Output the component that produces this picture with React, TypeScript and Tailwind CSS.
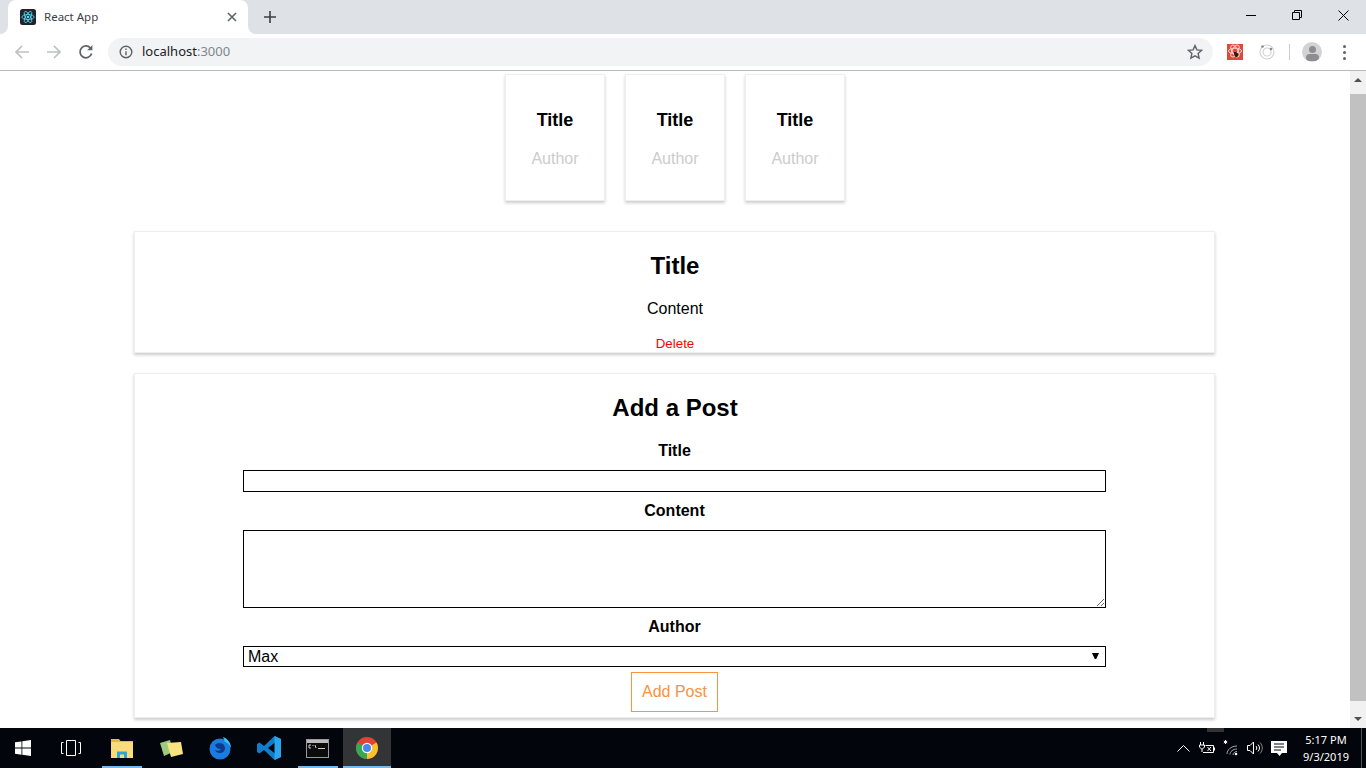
import { ReactNode } from "react";

const sans = "font-['Liberation_Sans',Arial,sans-serif]";
const chromeFont = "font-['Noto_Sans','Open_Sans',sans-serif]";

function ReactLogo({ size = 16 }: { size?: number }) {
  return (
    <svg width={size} height={size} viewBox="0 0 16 16">
      <rect width="16" height="16" rx="2.5" fill="#20232a" />
      <g fill="none" stroke="#61dafb" strokeWidth="0.8">
        <ellipse cx="8" cy="8" rx="6.2" ry="2.5" />
        <ellipse cx="8" cy="8" rx="6.2" ry="2.5" transform="rotate(60 8 8)" />
        <ellipse cx="8" cy="8" rx="6.2" ry="2.5" transform="rotate(120 8 8)" />
      </g>
      <circle cx="8" cy="8" r="1.3" fill="#61dafb" />
    </svg>
  );
}

function TabStrip() {
  return (
    <div className="flex h-[34px] shrink-0 bg-[#dee1e6]">
      <div className="relative ml-2 flex h-[34px] w-[240px] items-center rounded-t-lg bg-white pl-3 pr-[11px]">
        <div className="absolute bottom-0 left-[-8px] size-2 bg-white">
          <div className="size-2 rounded-br-lg bg-[#dee1e6]" />
        </div>
        <div className="absolute bottom-0 right-[-8px] size-2 bg-white">
          <div className="size-2 rounded-bl-lg bg-[#dee1e6]" />
        </div>
        <ReactLogo />
        <span className={`ml-2 flex-1 text-[11.5px] text-[#3c4043] ${chromeFont}`}>React App</span>
        <svg width="10" height="10" viewBox="0 0 10 10" stroke="#5f6368" strokeWidth="1.6">
          <path d="M1 1l8 8M9 1l-8 8" />
        </svg>
      </div>
      <div className="ml-[14px] flex h-[34px] w-4 items-center justify-center">
        <svg width="12" height="12" viewBox="0 0 12 12" stroke="#3c4043" strokeWidth="1.6">
          <path d="M6 0v12M0 6h12" />
        </svg>
      </div>
      <div className="flex-1" />
      <div className="flex h-[30px] w-[138px] items-center">
        <div className="flex w-[46px] justify-center">
          <div className="h-px w-[10px] bg-black" />
        </div>
        <div className="flex w-[46px] justify-center">
          <svg width="10" height="10" viewBox="0 0 10 10" fill="none" stroke="#000" strokeWidth="1">
            <path d="M.5 2.5h7v7h-7zM2.5 2.5v-2h7v7h-2" />
          </svg>
        </div>
        <div className="flex w-[46px] justify-center">
          <svg width="11" height="11" viewBox="0 0 11 11" stroke="#000" strokeWidth="1">
            <path d="M.5.5l10 10M10.500.5l-10 10" />
          </svg>
        </div>
      </div>
    </div>
  );
}

function Toolbar() {
  return (
    <div className="flex h-[37px] shrink-0 items-center border-b border-[#b7b9bc] bg-white">
      <div className="flex w-[108px] items-center pl-[14px]">
        <svg width="16" height="16" viewBox="0 0 16 16" fill="none" stroke="#bdc0c4" strokeWidth="1.7">
          <path d="M15 8H2M8 2L2 8l6 6" />
        </svg>
        <svg className="ml-4" width="16" height="16" viewBox="0 0 16 16" fill="none" stroke="#bdc0c4" strokeWidth="1.7">
          <path d="M1 8h13M8 2l6 6-6 6" />
        </svg>
        <svg className="ml-4" width="16" height="16" viewBox="0 0 16 16" fill="none" stroke="#5f6368" strokeWidth="1.8">
          <path d="M13.6 9.5A5.9 5.9 0 1 1 12.4 4" />
          <path d="M14.4 1v5.2H9.2z" fill="#5f6368" stroke="none" />
        </svg>
      </div>
      <div className="flex h-7 w-[1105px] items-center rounded-full bg-[#f1f3f4] pl-[11px] pr-[10px]">
        <svg width="14" height="14" viewBox="0 0 14 14" fill="none" stroke="#5f6368" strokeWidth="1.4">
          <circle cx="7" cy="7" r="5.8" />
          <path d="M7 6.2v4M7 3.6v1.5" />
        </svg>
        <span className={`ml-[9px] flex-1 text-[13px] text-[#202124] ${chromeFont}`}>
          localhost<span className="text-[#80868b]">:3000</span>
        </span>
        <svg width="16" height="16" viewBox="0 0 16 16" fill="none" stroke="#5f6368" strokeWidth="1.4">
          <path d="M8 1.6l1.900 4.300 4.600.5-3.400 3.100 1 4.600L8 11.800l-4.100 2.300 1-4.600L1.500 6.400l4.600-.5z" />
        </svg>
      </div>
      <div className="flex flex-1 items-center">
        <svg className="ml-[14px]" width="16" height="16" viewBox="0 0 16 16">
          <rect width="16" height="16" fill="#dc4a38" />
          <g fill="none" stroke="#f8d5d0" strokeWidth="1">
            <ellipse cx="8" cy="7" rx="6.500" ry="2.800" />
            <ellipse cx="8" cy="7" rx="6.500" ry="2.800" transform="rotate(60 8 7)" />
            <ellipse cx="8" cy="7" rx="6.500" ry="2.800" transform="rotate(120 8 7)" />
          </g>
          <path d="M7 8h2l1 1 1.500.5-.5 2-1 1.500H8.500L7.500 11.500 7 10z" fill="#2a1a18" />
        </svg>
        <svg className="ml-4" width="16" height="16" viewBox="0 0 16 16" fill="none" stroke="#d3d3d3" strokeWidth="1.200">
          <circle cx="8" cy="8" r="7" />
          <circle cx="8" cy="8" r="4" />
          <circle cx="3.500" cy="2.500" r="1.300" fill="#8a8a8a" stroke="none" />
          <circle cx="12" cy="5" r="1.300" fill="#8a8a8a" stroke="none" />
        </svg>
        <div className="ml-[14px] h-4 w-px bg-[#ccc]" />
        <div className="relative ml-3 size-5 overflow-hidden rounded-full bg-[#d2d3d5]">
          <div className="mx-auto mt-1 size-[7px] rounded-full bg-[#8d8e90]" />
          <div className="mx-auto mt-px h-[7px] w-[13px] rounded-full bg-[#8d8e90]" />
        </div>
        <div className="ml-[21px] flex flex-col gap-[3px]">
          <div className="size-[3px] rounded-full bg-[#5f6368]" />
          <div className="size-[3px] rounded-full bg-[#5f6368]" />
          <div className="size-[3px] rounded-full bg-[#5f6368]" />
        </div>
      </div>
    </div>
  );
}

function PostCard() {
  return (
    <article className="box-border flex h-[127px] w-[100px] flex-col items-center border border-[#eee] pt-[34px] shadow-[0_2px_3px_#ccc]">
      <h3 className="text-[18px] leading-[22px] font-bold text-black">Title</h3>
      <div className="mt-[19px] text-[16px] leading-[18px] text-[#ccc]">Author</div>
    </article>
  );
}

const panel = "w-[1081px] mr-px pl-px border border-[#eee] shadow-[0_2px_3px_#ccc] flex flex-col items-center";

function FormLabel({ children }: { children: ReactNode }) {
  return <label className="block text-[16px] leading-[18px] font-bold text-black">{children}</label>;
}

function Page() {
  return (
    <main className={`flex min-w-0 flex-1 flex-col items-center overflow-hidden bg-white pt-[3px] ${sans}`}>
      <section className="flex gap-5">
        <PostCard />
        <PostCard />
        <PostCard />
      </section>
      <section className={`${panel} mt-[30px] h-[122px] pt-[20px]`}>
        <h1 className="text-[24px] leading-[27px] font-bold text-black">Title</h1>
        <p className="mt-[21px] text-[16px] leading-[18px] text-black">Content</p>
        <button className="mt-[18px] text-[13.33px] leading-[15px] text-[#ff0000]">Delete</button>
      </section>
      <section className={`${panel} mt-[20px] h-[345px] pt-5`}>
        <h1 className="text-[24px] leading-[27px] font-bold text-black">Add a Post</h1>
        <div className="mt-[21px] flex w-[864px] flex-col items-center pr-px">
          <FormLabel>Title</FormLabel>
          <input className="mt-[10px] h-[22px] w-full border border-black bg-white px-1 text-[16px]" />
          <div className="mt-[10px]">
            <FormLabel>Content</FormLabel>
          </div>
          <textarea className="mt-[10px] block h-[78px] w-full border border-black bg-white px-1 text-[16px]" />
          <div className="mt-[10px]">
            <FormLabel>Author</FormLabel>
          </div>
          <div className="relative mt-[10px] h-[21px] w-full">
            <select
              defaultValue="Max"
              className="block h-[21px] w-full appearance-none border border-black bg-white pl-1 text-[16px] leading-[19px] text-black"
            >
              <option>Max</option>
              <option>Manu</option>
            </select>
            <svg className="absolute right-[7px] top-[7px]" width="7" height="6" viewBox="0 0 7 6" fill="#000">
              <path d="M0 0h7L4.200 6H2.800z" />
            </svg>
          </div>
          <button className="mt-[5px] h-10 w-[87px] border border-[#fa923f] text-[16px] text-[#fa923f]">
            Add Post
          </button>
        </div>
      </section>
    </main>
  );
}

function Scrollbar() {
  return (
    <div className="flex w-4 shrink-0 flex-col items-center bg-[#f1f1f1]">
      <div className="flex h-[23px] w-full items-start justify-center pt-[7px]">
        <div className="size-0 border-x-[4px] border-b-[4px] border-x-transparent border-b-[#505050]" />
      </div>
      <div className="h-[607px] w-full bg-[#c1c1c1]" />
      <div className="flex w-full flex-1 items-end justify-center pb-[7px]">
        <div className="size-0 border-x-[4px] border-t-[4px] border-x-transparent border-t-[#505050]" />
      </div>
    </div>
  );
}

function TaskItem({ children, line, active, className = "" }: { children: ReactNode; line?: boolean; active?: boolean; className?: string }) {
  return (
    <div className={`relative flex h-10 w-[49px] items-center justify-center ${active ? "w-[48px]! ml-px bg-[#333436]" : ""} ${className}`}>
      {children}
      {line && <div className={`absolute bottom-0 h-[2px] bg-[#76b9ed] ${active ? "inset-x-0" : "left-[5px] right-1"}`} />}
    </div>
  );
}

function Taskbar() {
  return (
    <footer className="relative flex h-10 shrink-0 items-center bg-[#02050b]">
      <div className="absolute left-[1207px] top-0 h-[4px] w-[17px] bg-[#333]" />
      <div className="flex h-10 w-[46px] items-center justify-center">
        <svg width="16" height="16" viewBox="0 0 16 16" fill="#fff">
          <path d="M0 2.300l6.500-.9v6.200H0zM7.300 1.300L16 0v7.600H7.300zM0 8.400h6.500v6.300L0 13.800zM7.300 8.400H16V16l-8.700-1.200z" />
        </svg>
      </div>
      <TaskItem>
        <svg width="20" height="16" viewBox="0 0 20 16" fill="none" stroke="#fff" strokeWidth="1">
          <path d="M5.500.5h9v15h-9zM2.500 2.500H.5v11h2M17.500 2.500h2v11h-2" />
        </svg>
      </TaskItem>
      <TaskItem line className="ml-[2px]">
        <svg width="22" height="20" viewBox="0 0 22 20">
          <path d="M0 1h8l1.500 2H22v4H0z" fill="#e8b93e" />
          <path d="M0 4h22v16H0z" fill="#fbdc7a" />
          <path d="M6 20v-6.500h10V20h-3v-3.500H9V20z" fill="#2ba6de" />
        </svg>
      </TaskItem>
      <TaskItem>
        <svg width="24" height="20" viewBox="0 0 24 20">
          <path d="M1 5l10-3 3 12-9 4z" fill="#9ccb7f" />
          <path d="M8 5l14-1 2 12-12 3z" fill="#f8e47e" />
        </svg>
      </TaskItem>
      <TaskItem>
        <svg width="24" height="24" viewBox="0 0 24 24">
          <circle cx="12" cy="13" r="10.500" fill="#1b7ce0" />
          <path d="M15 1c5 2 8 6 8 11-2-4-4-6-6-6z" fill="#36c4f0" />
          <path d="M7 9c3-3 7-2 9 0 2 3 1 7-3 8-3 .5-5-1-6-3 2 1 5 1 6-1-2 .5-5-1-6-4z" fill="#0b3a8f" />
        </svg>
      </TaskItem>
      <TaskItem>
        <svg width="24" height="24" viewBox="0 0 24 24">
          <path d="M17.500 0L24 3v18l-6.500 3L7 14l-4.500 3.500L0 16V8l2.500-1.500L7 10z" fill="#0f7fcb" />
          <path d="M18 6.500L11 12l7 5.500z" fill="#02050b" />
          <path d="M17.500 0L24 3v18l-6.500 3z" fill="#2aa5ee" />
        </svg>
      </TaskItem>
      <TaskItem line>
        <div className="h-[19px] w-[23px] border border-[#9a9a9a] bg-[#0c0c0c]">
          <div className="h-[3px] bg-[#bbb]" />
          <svg width="21" height="10" viewBox="0 0 21 10" fill="none" stroke="#ccc" strokeWidth="1">
            <path d="M2 2h2M2 2v3h2M6 2v1M6 5v.1M8 2l1 3M11 5.500h7" />
          </svg>
        </div>
      </TaskItem>
      <TaskItem line active>
        <svg width="22" height="22" viewBox="0 0 22 22">
          <circle cx="11" cy="11" r="11" fill="#e24335" />
          <path d="M11 11L20.500 5.500A11 11 0 0 1 11 22z" fill="#fbc02d" />
          <path d="M11 11L11 22A11 11 0 0 1 1.500 5.500z" fill="#34a853" />
          <circle cx="11" cy="11" r="5.200" fill="#fff" />
          <circle cx="11" cy="11" r="4" fill="#4a88ed" />
        </svg>
      </TaskItem>
      <div className="flex-1" />
      <div className="flex h-10 items-center">
        <div className="flex w-6 justify-center">
          <svg width="13" height="7" viewBox="0 0 13 7" fill="none" stroke="#fff" strokeWidth="1">
            <path d="M.5 6.500l6-6 6 6" />
          </svg>
        </div>
        <div className="flex w-6 justify-center">
          <svg width="16" height="12" viewBox="0 0 16 12" fill="none" stroke="#fff" strokeWidth="1">
            <path d="M1.500 0v3M4.500 0v3M.5 3h5v2l-2 2-1 0-2-2zM3 7v3M6.500 3.500h8v7H4M15.500 5.500v3M8.500 5l3.500 4M12 5l-3.500 4" />
          </svg>
        </div>
        <div className="flex w-6 justify-center">
          <svg width="16" height="16" viewBox="0 0 16 16" fill="none" stroke="#aaa" strokeWidth="1">
            <path d="M2.500 0v4M.8 1l3.400 2M4.200 1L.8 3" stroke="#fff" />
            <path d="M4 14c0-4 4-8 10-8M7 14.500c0-3 3-5.500 7-5.500M10 15c0-2 2-3.500 4-3.500" />
            <circle cx="13" cy="14" r="1.300" fill="#fff" stroke="none" />
          </svg>
        </div>
        <div className="flex w-6 justify-center">
          <svg width="16" height="14" viewBox="0 0 16 14" fill="none" stroke="#fff" strokeWidth="1">
            <path d="M.5 4.500h2.500l3.500-3.500v12l-3.500-3.500H.5zM9 5c1 1 1 3 0 4M11 3.500c2 2 2 5 0 7" />
            <path d="M13 1.500c3 3 3 8 0 11" stroke="#888" />
          </svg>
        </div>
        <div className="flex w-6 justify-center">
          <svg width="16" height="15" viewBox="0 0 16 15">
            <path d="M0 0h16v12h-5l-2.500 3-2.500-3H0z" fill="#fff" />
            <path d="M3 3h10M3 6h10M3 9h7" stroke="#02050b" strokeWidth="1" />
          </svg>
        </div>
        <div className={`ml-[5px] flex w-[60px] flex-col items-center text-[11px] leading-[17px] text-white ${chromeFont}`}>
          <span>5:17 PM</span>
          <span>9/3/2019</span>
        </div>
        <div className="ml-[5px] h-10 w-[5px] border-l border-[#555]" />
      </div>
    </footer>
  );
}

export default function App() {
  return (
    <div className="flex h-screen w-full flex-col overflow-hidden bg-white">
      <TabStrip />
      <Toolbar />
      <div className="flex min-h-0 flex-1">
        <Page />
        <Scrollbar />
      </div>
      <Taskbar />
    </div>
  );
}
